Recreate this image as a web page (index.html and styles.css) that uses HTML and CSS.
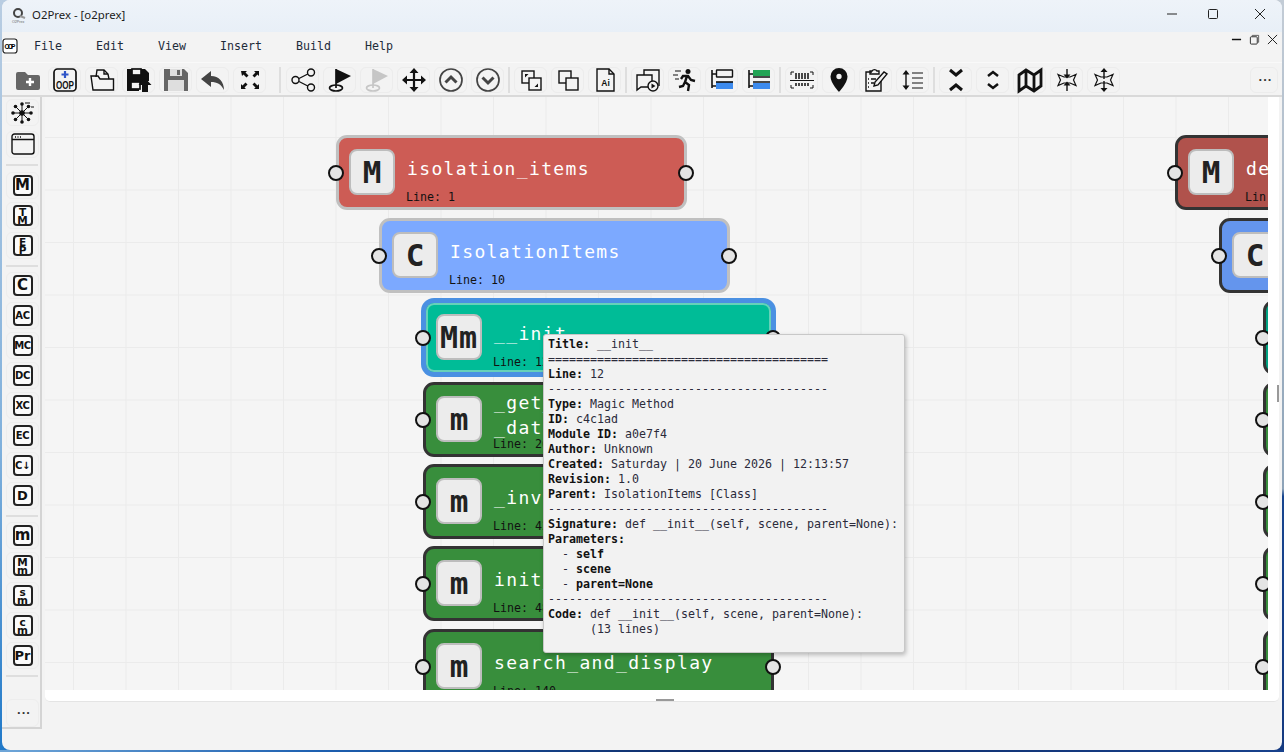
FILE: index.html
```html
<!DOCTYPE html>
<html lang="en">
<head>
    <meta charset="UTF-8">
    <meta name="viewport" content="width=device-width, initial-scale=1.0">
    <title>O2Prex - [o2prex]</title>
    <link rel="stylesheet" href="styles.css">
</head>
<body>
<div class="window">

    <!-- Title bar -->
    <div class="titlebar">
        <svg class="app-logo" viewBox="0 0 16 16"><circle cx="7" cy="6" r="4" fill="none" stroke="#444" stroke-width="2"/><path d="M9 9l5 2" stroke="#999" stroke-width="2"/><text x="1" y="15.5" font-size="3.6" fill="#666" font-family="Liberation Sans">O2Prex</text></svg>
        <span class="app-title">O2Prex - [o2prex]</span>
        <div class="win-controls">
            <svg class="win-btn" viewBox="0 0 12 12"><path d="M1 6h10" stroke="#222"/></svg>
            <svg class="win-btn" viewBox="0 0 12 12"><rect x="1.5" y="1.5" width="9" height="9" rx="1" fill="none" stroke="#222"/></svg>
            <svg class="win-btn" viewBox="0 0 12 12"><path d="M1 1l10 10M11 1L1 11" stroke="#222"/></svg>
        </div>
    </div>

    <!-- Menu bar -->
    <div class="menubar">
        <svg class="menu-logo" viewBox="0 0 16 16"><rect x="1" y="1" width="14" height="14" rx="2.5" fill="#fff" stroke="#222" stroke-width="1.2"/><text x="8" y="10.8" text-anchor="middle" font-size="6.6" font-weight="bold" textLength="11" font-family="Liberation Sans">OOP</text></svg>
        <a class="menu-item">File</a>
        <a class="menu-item">Edit</a>
        <a class="menu-item">View</a>
        <a class="menu-item">Insert</a>
        <a class="menu-item">Build</a>
        <a class="menu-item">Help</a>
        <div class="mdi-controls">
            <svg class="mdi-btn" viewBox="0 0 12 12"><path d="M1 6h10" stroke="#111" stroke-width="1.6"/></svg>
            <svg class="mdi-btn" viewBox="0 0 12 12"><rect x="1.5" y="3" width="7.5" height="8" rx="1" fill="none" stroke="#222"/><path d="M3.5 3V1.5h7V9H9" fill="none" stroke="#555"/></svg>
            <svg class="mdi-btn" viewBox="0 0 12 12"><path d="M1 1l10 10M11 1L1 11" stroke="#111"/></svg>
        </div>
    </div>

    <!-- Toolbar -->
    <div class="toolbar">
        <button class="tool flat"><svg class="ico" viewBox="0 0 24 24"><path class="f-grey" d="M0 6a2 2 0 0 1 2-2h7l3 3h10a2 2 0 0 1 2 2v11a2 2 0 0 1-2 2H2a2 2 0 0 1-2-2z"/><path class="w" d="M14 10v8M10 14h8"/></svg></button>
        <button class="tool"><svg class="ico" viewBox="0 0 24 24"><rect x="1" y="1" width="22" height="22" rx="3.5"/><path class="b" d="M12 3v7M8.5 6.5h7"/><text class="ico-txt" x="12" y="21" text-anchor="middle" font-size="11" textLength="18" lengthAdjust="spacingAndGlyphs">OOP</text></svg></button>
        <button class="tool"><svg class="ico thin" viewBox="0 0 24 24"><path d="M6 9l1-7h7l4 4 1 5"/><path d="M14 2v4h4"/><path d="M1 8h7l2 3h13.500v11H3z"/></svg></button>
        <button class="tool"><svg class="ico" viewBox="0 0 24 24"><path class="f" d="M0 1h18l4 4v8h-6l-4 5v5H0z"/><rect class="f-white" x="5" y="1" width="9" height="6"/><rect class="f-white" x="4" y="14" width="9" height="7"/><path class="f" stroke="#fff" d="M18 10l6.500 7H21v7h-6v-7h-3.500z"/></svg></button>
        <button class="tool"><svg class="ico" viewBox="0 0 24 24"><path class="f-grey" d="M0 1h20l4 4v18H0z"/><rect class="f-light" x="6" y="1" width="12" height="7"/><rect class="f-grey" x="13" y="2" width="3" height="5"/><rect class="f-light" x="4" y="12" width="16" height="11"/></svg></button>
        <button class="tool"><svg class="ico" viewBox="0 0 24 24"><path class="f-dark" d="M10 3L0 11l10 8v-5c6 0 10 2 13 8 0-8-5-14-13-14z"/></svg></button>
        <button class="tool"><svg class="ico" viewBox="0 0 24 24"><path class="f" d="M3 3h6L7.500 4.500l3 3-2 2-3-3L4 8zM21 3v5l-1.500-1.500-3 3-2-2 3-3L16 3zM3 21v-5l1.500 1.500 3-3 2 2-3 3L8 21zM21 21h-5l1.500-1.500-3-3 2-2 3 3L21 16z"/></svg></button>
        <span class="tool-sep sep-wide"></span>
        <button class="tool"><svg class="ico thin" viewBox="0 0 24 24"><circle cx="4.500" cy="12" r="3.500"/><circle cx="20" cy="4.500" r="3.500"/><circle cx="20" cy="19.500" r="3.500"/><path d="M8 10.500l8.800-4.500M8 13.500l8.800 4.500"/></svg></button>
        <button class="tool"><svg class="ico" viewBox="0 0 24 24"><path class="f" d="M8 1l15 7-15 8z"/><path d="M8 1v19"/><ellipse cx="8" cy="20" rx="6.500" ry="3"/></svg></button>
        <button class="tool"><svg class="ico pale" viewBox="0 0 24 24"><path class="f-pale" d="M8 1l15 7-15 8z"/><path d="M8 1v19"/><ellipse cx="8" cy="20" rx="6.500" ry="3"/></svg></button>
        <button class="tool"><svg class="ico" viewBox="0 0 24 24"><path d="M12 3v18M3 12h18" stroke-width="2.200"/><path class="f" d="M12 0l4.500 5h-9zM12 24l4.500-5h-9zM0 12l5-4.500v9zM24 12l-5-4.500v9z"/></svg></button>
        <button class="tool"><svg class="ico grey" viewBox="0 0 24 24"><circle cx="12" cy="12" r="11"/><path stroke-width="3" d="M6.500 14.500L12 9l5.500 5.500"/></svg></button>
        <button class="tool"><svg class="ico grey" viewBox="0 0 24 24"><circle cx="12" cy="12" r="11"/><path stroke-width="3" d="M6.500 9.500L12 15l5.500-5.500"/></svg></button>
        <span class="tool-sep"></span>
        <button class="tool"><svg class="ico thin" viewBox="0 0 24 24"><rect x="3" y="3" width="12" height="12"/><rect class="f-white" x="10" y="10" width="12" height="12"/><path class="f" d="M6 6h3.500L6 9.500zM19 19h-3.500l3.500-3.500z"/></svg></button>
        <button class="tool"><svg class="ico thin" viewBox="0 0 24 24"><rect x="3" y="3" width="12" height="12"/><rect class="f-white" x="10" y="10" width="12" height="12"/></svg></button>
        <button class="tool"><svg class="ico thin" viewBox="0 0 24 24"><path d="M4 1h12l5 5v17H4z"/><path d="M16 1v5h5"/><text class="ico-txt" x="12.500" y="18" text-anchor="middle" font-size="8.500">Ai</text></svg></button>
        <span class="tool-sep"></span>
        <button class="tool"><svg class="ico thin" viewBox="0 0 24 24"><path d="M8 7V2h15v16"/><path d="M1 7h15v12H5l-4 3z"/><circle class="f-white" cx="17" cy="18" r="5"/><path class="f" d="M15.500 15.500l4 2.500-4 2.500z"/></svg></button>
        <button class="tool"><svg class="ico" viewBox="0 0 24 24"><circle class="f" cx="15" cy="3.500" r="2.500"/><path stroke-width="2.400" d="M14 8l-2 6 4 3-1 6M12 14l-2 4-4 1M8 11l2-3h5l3 4 4 1"/><path stroke-width="1.200" d="M2 3h6M0 7h5M2 11h4"/></svg></button>
        <button class="tool"><svg class="ico thin" viewBox="0 0 24 24"><path stroke-width="1.600" d="M2 2v18M2 6h4M2 18h4"/><rect x="6.500" y="2" width="16" height="7" rx="0.500"/><rect class="f-blue" x="6" y="14" width="17" height="7"/><path stroke-width="1.600" d="M6 14h17"/></svg></button>
        <button class="tool"><svg class="ico thin" viewBox="0 0 24 24"><path stroke-width="1.600" d="M2 2v18M2 6h4M2 18h4"/><rect class="f-green" x="6" y="2" width="17" height="6"/><path stroke-width="1.600" d="M6 9h17M6 14h17"/><rect class="f-blue" x="6" y="15" width="17" height="6"/></svg></button>
        <span class="tool-sep"></span>
        <button class="tool"><svg class="ico thin" viewBox="0 0 24 24"><path stroke-width="1" d="M1 7V4h3M20 4h3v3M1 17v3h3M20 20h3v-3M0 12.500h24"/><path stroke-width="1.500" d="M6 5v6M9 5v6M12 5v6M15 5v6M18 5v6M6 15v3M9 15v3M12 15v3M15 15v3M18 15v3"/></svg></button>
        <button class="tool"><svg class="ico" viewBox="0 0 24 24"><path class="f" d="M12 0a8.500 8.500 0 0 0-8.500 8.500C3.500 15 12 24 12 24s8.500-9 8.500-15.500A8.500 8.500 0 0 0 12 0z"/><circle class="f-white" cx="12" cy="8.500" r="3.500"/></svg></button>
        <button class="tool"><svg class="ico thin" viewBox="0 0 24 24"><path d="M8 4H2v19h15V13"/><path d="M6 6V3h2a3 3 0 0 1 5 0h2v3z"/><path d="M4 11h1M4 15h1M4 19h1M7 11h5M7 15h3"/><path d="M10 18l1-4L20 4l3 2-9 11z"/></svg></button>
        <button class="tool"><svg class="ico thin" viewBox="0 0 24 24"><path d="M5 5v14"/><path class="f" d="M5 2l3.500 4.500h-7zM5 22l3.500-4.500h-7z"/><path stroke-width="1.200" d="M11 5h11M11 10h11M11 15h11M11 20h11"/></svg></button>
        <span class="tool-sep"></span>
        <button class="tool"><svg class="ico" viewBox="0 0 24 24"><path stroke-width="3" d="M6 2l6 5 6-5M6 22l6-5 6 5"/></svg></button>
        <button class="tool"><svg class="ico" viewBox="0 0 24 24"><path stroke-width="2.500" d="M7 8l5-4 5 4M7 16l5 4 5-4"/></svg></button>
        <button class="tool"><svg class="ico" viewBox="0 0 24 24"><path stroke-width="2.800" d="M1 7l7-5 8 5 7-5v16l-7 5-8-5-7 5zM8 2v16M16 7v16"/></svg></button>
        <button class="tool"><svg class="ico thin" viewBox="0 0 24 24"><path stroke-width="1.200" d="M3 6.500l6 2.500h6l6-2.500-2.500 5.500 2.500 5.500-6-2.500H9l-6 2.500L5.500 12z"/><path d="M12 1v7M12 23v-7"/><path class="f" d="M12 10.500l-3.500-4h7zM12 13.500l-3.500 4h7z"/></svg></button>
        <button class="tool"><svg class="ico thin" viewBox="0 0 24 24"><path stroke-width="1.200" d="M3 6.500l6 2.500h6l6-2.500-2.500 5.500 2.500 5.500-6-2.500H9l-6 2.500L5.500 12z"/><path d="M12 3v8M12 21v-8"/><path class="f" d="M12 0L8.500 4h7zM12 24l-3.500-4h7z"/></svg></button>
        <button class="tool tool-more">...</button>
    </div>

    <div class="main">

        <!-- Left palette -->
        <div class="palette">
            <button class="pal pal-top"><svg class="ico tiny" viewBox="0 0 24 24"><path d="M11 3v18M2 12h18M4.500 5.500l13 13M17.500 5.500l-13 13"/><circle class="f" cx="11" cy="12" r="2.800"/><circle class="f" cx="11" cy="3" r="1.800"/><circle class="f" cx="11" cy="21" r="1.800"/><circle class="f" cx="2" cy="12" r="1.800"/><circle class="f" cx="20" cy="12" r="1.800"/><circle class="f" cx="4.500" cy="5.500" r="1.800"/><circle class="f" cx="17.500" cy="18.500" r="1.800"/><circle class="f" cx="4.500" cy="18.500" r="1.800"/><circle class="f" cx="17.500" cy="5.500" r="1.800"/><path d="M14 2h5M20 6h3"/></svg></button>
            <button class="pal"><svg class="ico thin" viewBox="0 0 24 24"><rect x="1" y="1" width="22" height="20" rx="2.500"/><path d="M1 6.500h22M4 4h1M6.500 4h1M9 4h1"/></svg></button>
            <span class="pal-sep pal-sep-first"></span>
            <button class="pal"><span class="glyph">M</span></button>
            <button class="pal"><span class="glyph glyph-stack"><span>T</span><span>M</span></span></button>
            <button class="pal"><span class="glyph glyph-stack"><span>E</span><span>P</span></span></button>
            <span class="pal-sep"></span>
            <button class="pal"><span class="glyph">C</span></button>
            <button class="pal"><span class="glyph glyph-sm">AC</span></button>
            <button class="pal"><span class="glyph glyph-sm">MC</span></button>
            <button class="pal"><span class="glyph glyph-sm">DC</span></button>
            <button class="pal"><span class="glyph glyph-sm">XC</span></button>
            <button class="pal"><span class="glyph glyph-sm">EC</span></button>
            <button class="pal"><span class="glyph glyph-sm">C↓</span></button>
            <button class="pal"><span class="glyph glyph-md">D</span></button>
            <span class="pal-sep"></span>
            <button class="pal"><span class="glyph">m</span></button>
            <button class="pal"><span class="glyph glyph-stack"><span>M</span><span>m</span></span></button>
            <button class="pal"><span class="glyph glyph-stack"><span>s</span><span>m</span></span></button>
            <button class="pal"><span class="glyph glyph-stack"><span>c</span><span>m</span></span></button>
            <button class="pal"><span class="glyph glyph-md">Pr</span></button>
            <span class="pal-sep"></span>
            <button class="pal pal-more">...</button>
        </div>

        <!-- Scene -->
        <div class="panel">
            <div class="canvas">

                <div class="node module is-parent col-a row-1">
                    <span class="port port-in"></span>
                    <div class="badge">M</div>
                    <div class="node-text"><div class="node-title"><div>isolation_items</div></div><div class="node-line">Line: 1</div></div>
                    <span class="port port-out"></span>
                </div>
                <div class="node class is-parent col-b row-2">
                    <span class="port port-in"></span>
                    <div class="badge">C</div>
                    <div class="node-text"><div class="node-title"><div>IsolationItems</div></div><div class="node-line">Line: 10</div></div>
                    <span class="port port-out"></span>
                </div>
                <div class="node magic is-selected col-c row-3">
                    <span class="port port-in"></span>
                    <div class="badge">Mm</div>
                    <div class="node-text"><div class="node-title"><div>__init__</div></div><div class="node-line">Line: 12</div></div>
                    <span class="port port-out"></span>
                </div>
                <div class="node method col-c row-4">
                    <span class="port port-in"></span>
                    <div class="badge">m</div>
                    <div class="node-text"><div class="node-title"><div>_get_items</div><div>_data</div></div><div class="node-line">Line: 26</div></div>
                    <span class="port port-out"></span>
                </div>
                <div class="node method col-c row-5">
                    <span class="port port-in"></span>
                    <div class="badge">m</div>
                    <div class="node-text"><div class="node-title"><div>_invalidate</div></div><div class="node-line">Line: 42</div></div>
                    <span class="port port-out"></span>
                </div>
                <div class="node method col-c row-6">
                    <span class="port port-in"></span>
                    <div class="badge">m</div>
                    <div class="node-text"><div class="node-title"><div>init_ui</div></div><div class="node-line">Line: 48</div></div>
                    <span class="port port-out"></span>
                </div>
                <div class="node method col-c row-7">
                    <span class="port port-in"></span>
                    <div class="badge">m</div>
                    <div class="node-text"><div class="node-title"><div>search_and_display</div></div><div class="node-line">Line: 140</div></div>
                    <span class="port port-out"></span>
                </div>

                <div class="node module col-d row-1">
                    <span class="port port-in"></span>
                    <div class="badge">M</div>
                    <div class="node-text"><div class="node-title"><div>de</div></div><div class="node-line">Lin</div></div>
                </div>
                <div class="node class col-e row-2">
                    <span class="port port-in"></span>
                    <div class="badge">C</div>
                </div>
                <div class="node magic col-f row-3"><span class="port port-in"></span></div>
                <div class="node method col-f row-4"><span class="port port-in"></span></div>
                <div class="node method col-f row-5"><span class="port port-in"></span></div>
                <div class="node method col-f row-6"><span class="port port-in"></span></div>
                <div class="node method col-f row-7"><span class="port port-in"></span></div>

                <pre class="tooltip"><b>Title:</b> __init__
========================================
<b>Line:</b> 12
----------------------------------------
<b>Type:</b> Magic Method
<b>ID:</b> c4c1ad
<b>Module ID:</b> a0e7f4
<b>Author:</b> Unknown
<b>Created:</b> Saturday | 20 June 2026 | 12:13:57
<b>Revision:</b> 1.0
<b>Parent:</b> IsolationItems [Class]
----------------------------------------
<b>Signature:</b> def __init__(self, scene, parent=None):
<b>Parameters:</b>
  - <b>self</b>
  - <b>scene</b>
  - <b>parent=None</b>
----------------------------------------
<b>Code:</b> def __init__(self, scene, parent=None):
      (13 lines)</pre>
            </div>
            <div class="vscroll"><span class="vthumb"></span></div>
            <div class="hscroll"><span class="hthumb"></span></div>
        </div>
    </div>
</div>
</body>
</html>
```

FILE: styles.css
```css
* {
    box-sizing: border-box;
}
html, body {
    height: 100%;
}
body {
    margin: 0;
    padding: 0 2px 2px;
    height: 752px;
    overflow: hidden;
    background:
        linear-gradient(to right, #6fa6d8, #1c5fb0 25%, #0e2a66 55%, #17418c) left bottom / 100% 2px no-repeat,
        linear-gradient(to bottom, #b9cde2, #7fb0dc 60%, #1f78c8) left top / 50% 100% no-repeat,
        linear-gradient(to bottom, #c3ccd6, #8da3b8 65%, #16448f 66%, #153a80) right top / 50% 100% no-repeat;
    font-family: "DejaVu Sans Mono", monospace;
    color: #111;
}
.window {
    height: 750px;
    background: #f3f3f3;
    border-radius: 8px;
    overflow: hidden;
    display: flex;
    flex-direction: column;
}

/* title bar */
.titlebar {
    height: 32px;
    flex: none;
    display: flex;
    align-items: center;
    padding-left: 9px;
    background: linear-gradient(to bottom, #eef3f9, #e8eff7);
}
.app-logo {
    width: 16px;
    height: 16px;
    margin-bottom: 3px;
}
.app-title {
    margin-left: 5px;
    margin-bottom: 3px;
    font: 11.4px "Noto Sans", sans-serif;
    color: #1b1b1b;
}
.win-controls {
    margin-left: auto;
    display: flex;
    align-items: center;
    gap: 29px;
    height: 100%;
    padding-right: 16px;
}
.win-btn {
    width: 12px;
    height: 12px;
    margin-bottom: 4px;
}
.win-btn:last-child {
    margin-left: 6px;
}

/* menu */
.menubar {
    height: 30px;
    flex: none;
    display: flex;
    align-items: center;
}
.menu-logo {
    width: 16px;
    height: 16px;
    margin-right: -1px;
    margin-bottom: 2px;
}
.menu-item {
    padding: 0 17px;
    font-size: 11.63px;
    color: #1d2b3a;
    margin-bottom: 2px;
}
.mdi-controls {
    margin-left: auto;
    align-self: flex-start;
    display: flex;
    gap: 7px;
    padding: 2px 4px 0 0;
}
.mdi-btn {
    width: 11px;
    height: 11px;
}

/* toolbar */
.toolbar {
    height: 35px;
    flex: none;
    display: flex;
    align-items: flex-start;
    gap: 4px;
    padding: 4px 0 0 9px;
    border-top: 1px solid #f9f9f9;
    border-bottom: 2px solid #d9d9d9;
}
.tool {
    width: 33px;
    height: 26px;
    padding: 0;
    border: 1px solid #ececec;
    border-radius: 6px;
    background: #f3f3f3;
    display: flex;
    align-items: center;
    justify-content: center;
}
.tool.flat {
    border-color: transparent;
}
.tool-sep {
    width: 2px;
    height: 26px;
    background: #dedede;
}
.sep-wide {
    margin: 0 1px 0 9px;
}
.tool-more {
    width: 28px;
    margin-left: auto;
    margin-right: 4px;
    padding-bottom: 6px;
    font: bold 11px "DejaVu Sans Mono", monospace;
    letter-spacing: -2px;
    color: #333;
}

/* icons */
.ico {
    width: 24px;
    height: 24px;
    flex: none;
    fill: none;
    stroke: #111;
    stroke-width: 1.7;
    overflow: visible;
}
.ico.thin {
    stroke-width: 1.4;
}
.ico.tiny {
    stroke-width: 1;
}
.ico.grey {
    stroke: #444;
}
.ico.pale {
    stroke: #c6c6c6;
}
.ico .f { fill: #111; stroke: none; }
.ico .f-white { fill: #f3f3f3; }
.ico .f-grey { fill: #666; stroke: none; }
.ico .f-dark { fill: #444; stroke: none; }
.ico .f-light { fill: #dedede; stroke: none; }
.ico .f-pale { fill: #c6c6c6; stroke: none; }
.ico .f-blue { fill: #3d8bee; stroke: none; }
.ico .f-green { fill: #22a455; stroke: none; }
.ico .w { stroke: #fff; stroke-width: 2.4; }
.ico .b { stroke: #2f55c8; stroke-width: 2.2; }
.ico-txt {
    font-family: "Liberation Sans", sans-serif;
    font-weight: bold;
    fill: #111;
    stroke: none;
}

/* body of the window */
.main {
    flex: 1;
    display: flex;
    align-items: flex-start;
    min-height: 0;
}

/* palette */
.palette {
    width: 40px;
    height: 632px;
    flex: none;
    display: flex;
    flex-direction: column;
    align-items: flex-start;
    gap: 3px;
    padding: 2px 0 0 4px;
    border-right: 2px solid #d4d4d4;
    border-bottom: 2px solid #d4d4d4;
}
.pal {
    width: 33px;
    height: 27px;
    flex: none;
    padding: 0;
    border: 1px solid #ededed;
    border-radius: 6px;
    background: #f3f3f3;
    display: flex;
    align-items: center;
    justify-content: center;
}
.pal-top {
    margin-bottom: 2px;
}
.pal-sep {
    width: 32px;
    height: 2px;
    flex: none;
    background: #dedede;
    margin: 3px 0 2px;
}
.pal-sep-first {
    margin-bottom: 3px;
}
.pal-more {
    height: 28px;
    margin-top: 17px;
    padding-bottom: 6px;
    font: bold 11px "DejaVu Sans Mono", monospace;
    letter-spacing: -2px;
    color: #333;
}
.glyph {
    width: 20px;
    height: 21px;
    border: 2px solid #222;
    border-radius: 4px;
    background: #fbfbfb;
    display: flex;
    align-items: center;
    justify-content: center;
    font: bold 15px/1 "DejaVu Sans", sans-serif;
    color: #111;
}
.glyph-sm {
    font-size: 10px;
    letter-spacing: -0.4px;
}
.glyph-md {
    font-size: 13px;
}
.glyph-stack {
    flex-direction: column;
    font-size: 10.5px;
    line-height: 8px;
}

/* scene panel */
.panel {
    width: 1234px;
    height: 605px;
    margin-left: 3px;
    background: #fff;
    border-radius: 0 0 5px 5px;
    border-bottom: 1px solid #e4e4e4;
    display: grid;
    grid-template-columns: 1223px 11px;
    grid-template-rows: 593px 11px;
}
.canvas {
    position: relative;
    overflow: hidden;
    background-color: #f5f5f5;
    background-image:
        linear-gradient(to right, #ebebeb 1px, transparent 1px),
        linear-gradient(to bottom, #ebebeb 1px, transparent 1px);
    background-size: 52.5px 52.5px;
    background-position: 28px 40px;
}
.vscroll {
    position: relative;
}
.vthumb {
    position: absolute;
    top: 288px;
    left: 9px;
    width: 2px;
    height: 17px;
    background: #999;
}
.hscroll {
    position: relative;
    grid-column: 1 / 3;
}
.hthumb {
    position: absolute;
    top: 9px;
    left: 611px;
    width: 18px;
    height: 2px;
    background: #999;
}

/* nodes */
.node {
    position: absolute;
    width: 351px;
    height: 75px;
    display: flex;
    padding: 11px 10px;
    border: 3px solid #333;
    border-radius: 11px;
}
.node.module { background: #b0524c; }
.node.class { background: #6495ed; }
.node.magic { background: #00a383; }
.node.method { background: #388e3c; }
.node.is-parent { border-color: #c0c0c0; }
.node.module.is-parent { background: #cd5c55; }
.node.class.is-parent { background: #7ca9ff; }
.node.is-selected {
    background: #00bc97;
    border-color: #4a90e2;
    box-shadow: 0 0 0 2px #4a90e2, inset 0 0 0 2px #66d1b9;
}
.col-a { left: 291px; }
.col-b { left: 334px; }
.col-c { left: 378px; }
.col-d { left: 1130px; }
.col-e { left: 1174px; }
.col-f { left: 1218px; }
.row-1 { top: 38px; }
.row-2 { top: 121px; }
.row-3 { top: 203px; }
.row-4 { top: 285px; }
.row-5 { top: 367px; }
.row-6 { top: 449px; }
.row-7 { top: 532px; }

.badge {
    width: 46px;
    height: 46px;
    flex: none;
    display: flex;
    align-items: center;
    justify-content: center;
    background: #ececec;
    border: 2px solid #bdbdbd;
    border-radius: 8px;
    font: bold 31px "DejaVu Sans Mono", monospace;
    color: #222;
}
.magic .badge {
    letter-spacing: 1px;
    font-size: 30px;
}
.node-text {
    margin-left: 12px;
    flex: 1;
    min-width: 0;
}
.node-title {
    height: 38px;
    display: flex;
    flex-direction: column;
    justify-content: center;
    font-size: 18px;
    line-height: 25px;
    letter-spacing: 1.36px;
    color: #fff;
}
.node-line {
    margin: 3px 0 0 -1px;
    font-size: 11.63px;
    line-height: 15px;
    color: #111;
    white-space: nowrap;
}
.port {
    position: absolute;
    top: calc(50% - 8px);
    width: 16px;
    height: 16px;
    border: 2px solid #111;
    border-radius: 50%;
    background: #e4e4e4;
}
.port-in {
    left: -11px;
}
.port-out {
    right: -10px;
}

/* tooltip */
.tooltip {
    position: absolute;
    left: 498px;
    top: 237px;
    width: 362px;
    height: 319px;
    margin: 0;
    padding: 2px 4px;
    background: #f2f2f2;
    border: 1px solid #c8c8c8;
    border-radius: 3px;
    box-shadow: 1px 2px 4px rgba(0, 0, 0, 0.25);
    font-family: "DejaVu Sans Mono", monospace;
    font-size: 11.63px;
    line-height: 15px;
    color: #2b2b3a;
}
.tooltip b {
    color: #111;
}
```
